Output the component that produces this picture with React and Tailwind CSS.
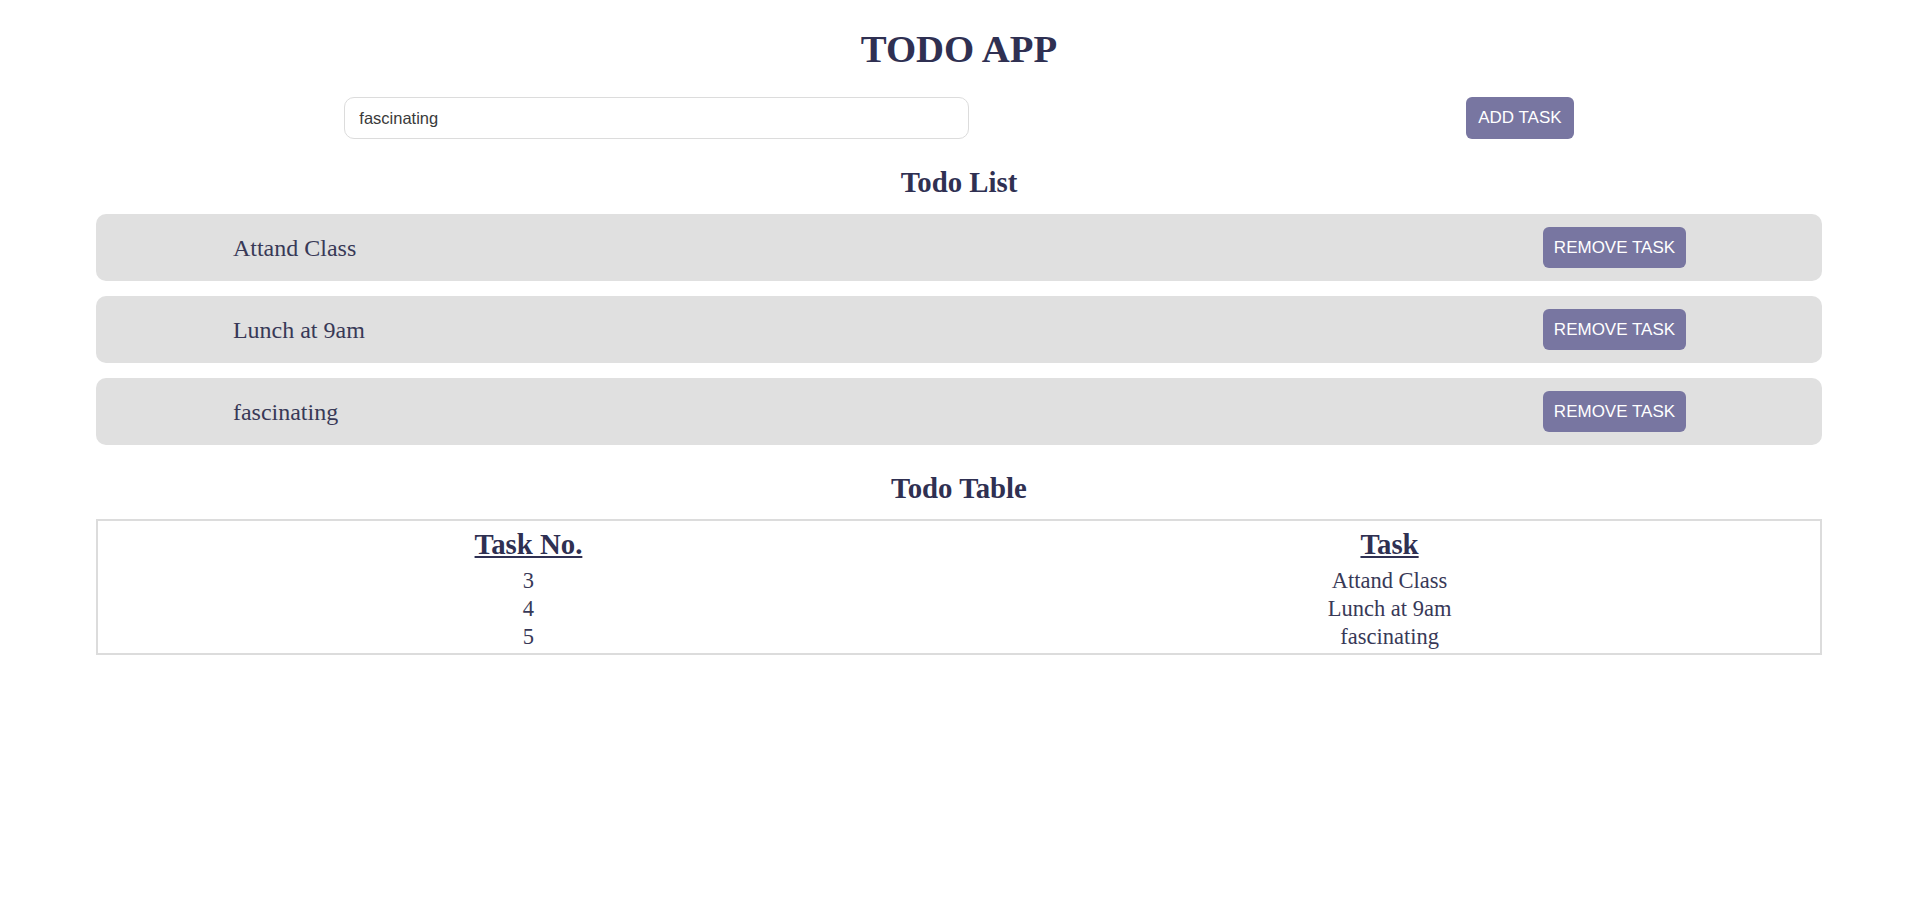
const TASKS = [
  { id: 3, title: "Attand Class" },
  { id: 4, title: "Lunch at 9am" },
  { id: 5, title: "fascinating" },
];

const sans = { fontFamily: '"Liberation Sans", Arial, sans-serif' };

export default function App() {
  return (
    <div
      className="min-h-screen w-full bg-white text-[#2f3052]"
      style={{ fontFamily: '"Liberation Serif", "Times New Roman", serif' }}
    >
      <h1 className="pt-[27px] text-center text-[38.8px] font-bold leading-[44px]">TODO APP</h1>

      <div className="mx-auto mt-[26px] flex w-[90%] items-center justify-around">
        <input
          readOnly
          value="fascinating"
          style={sans}
          className="h-[42px] w-[625px] rounded-[10px] border border-[#dcdcdc] px-[14px] text-[16.5px] text-[#3a3a3a] outline-none"
        />
        <button
          style={sans}
          className="h-[42px] rounded-[6px] bg-[#7876a1] px-[12px] text-[17px] text-white"
        >
          ADD TASK
        </button>
      </div>

      <h2 className="mt-[26px] text-center text-[28.8px] font-bold leading-[34px]">Todo List</h2>

      <div className="mx-auto mt-[15px] flex w-[90%] flex-col gap-[15px]">
        {TASKS.map((t) => (
          <div
            key={t.id}
            className="flex h-[67px] items-center justify-between rounded-[10px] bg-[#e0e0e0] pl-[137px] pr-[136px]"
          >
            <span className="text-[24px] text-[#383957]">{t.title}</span>
            <button
              style={sans}
              className="h-[41px] rounded-[6px] bg-[#7876a1] px-[11px] text-[17px] text-white"
            >
              REMOVE TASK
            </button>
          </div>
        ))}
      </div>

      <h2 className="mt-[26px] text-center text-[28.8px] font-bold leading-[34px]">Todo Table</h2>

      <table className="mx-auto mt-[14px] w-[90%] table-fixed border-2 border-[#dcdcdc]">
        <thead>
          <tr>
            <th className="pt-[6px] text-[28.8px] font-bold leading-[34px] underline">Task No.</th>
            <th className="pt-[6px] text-[28.8px] font-bold leading-[34px] underline">Task</th>
          </tr>
        </thead>
        <tbody className="text-[22.5px] leading-[28px] text-[#383957]">
          {TASKS.map((t, i) => (
            <tr key={t.id}>
              <td className={`text-center ${i === 0 ? "pt-[6px]" : ""} ${i === 2 ? "pb-[2px]" : ""}`}>{t.id}</td>
              <td className={`text-center ${i === 0 ? "pt-[6px]" : ""} ${i === 2 ? "pb-[2px]" : ""}`}>{t.title}</td>
            </tr>
          ))}
        </tbody>
      </table>
    </div>
  );
}
